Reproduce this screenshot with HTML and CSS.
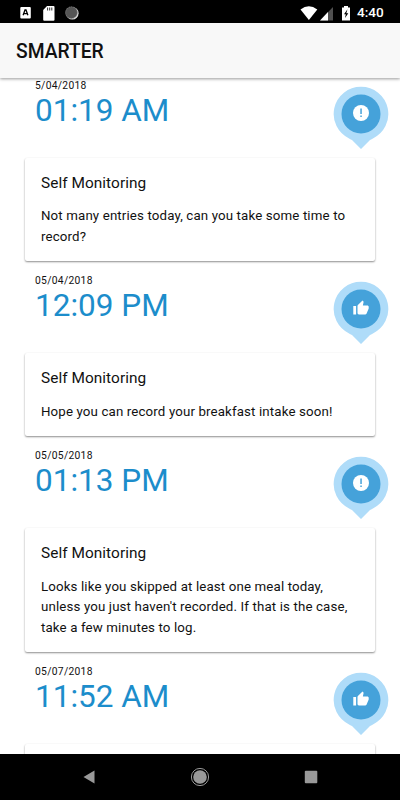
FILE: index.html
```
<!DOCTYPE html>
<html lang="en">
<head>
    <meta charset="UTF-8">
    <meta name="viewport" content="width=device-width, initial-scale=1.0">
    <title>SMARTER</title>
    <link rel="stylesheet" href="styles.css">
</head>
<body>
    <!-- shared icons -->
    <svg class="defs" width="0" height="0">
        <symbol id="pin" viewBox="0 0 56 64">
            <path d="M28 .8a27.2 27.2 0 0 1 11.5 51.9Q38 53.300 37 54.100L28 63l-9-8.900Q18 53.300 16.500 52.700A27.200 27.200 0 0 1 28 .8z" fill="#afdcf9"/>
            <circle cx="28" cy="28" r="19.500" fill="#45a2da"/>
        </symbol>
        <symbol id="alert" viewBox="0 0 56 64">
            <use href="#pin"/>
            <circle cx="28" cy="27" r="8" fill="#fff"/>
            <path d="M27.300 22.500h1.500v5.500h-1.500zM27.300 29.500h1.500v1.500h-1.500z" fill="#45a2da"/>
        </symbol>
        <symbol id="like" viewBox="0 0 56 64">
            <use href="#pin"/>
            <path transform="translate(19.600 18.800) scale(.7)" d="M1 21h4V9H1v12zm22-11c0-1.100-.9-2-2-2h-6.310l.95-4.570.03-.32c0-.41-.17-.79-.44-1.060L14.170 1 7.590 7.590C7.220 7.950 7 8.450 7 9v10c0 1.100.9 2 2 2h9c.83 0 1.540-.5 1.840-1.220l3.020-7.050c.09-.23.14-.47.14-.73v-2z" fill="#fff"/>
        </symbol>
    </svg>

    <div class="status-bar">
        <svg class="status-left" width="62" height="18" viewBox="0 0 62 18">
            <rect x=".3" y="3" width="10.500" height="11.500" rx="1" fill="#fff"/>
            <path d="M3.100 11.300L5 6h1L7.900 11.300M3.800 9.600h3.400" fill="none" stroke="#000" stroke-width="1.300"/>
            <path d="M27 2h6.500q1 0 1 1v12.700q0 1-1 1H24.200q-1 0-1-1V6z" fill="#fff"/>
            <path d="M27.600 3.500v3M29.700 3.500v3M31.800 3.500v3" stroke="#333" stroke-width="1"/>
            <circle cx="52.300" cy="9.200" r="6.300" fill="#ddd"/>
            <circle cx="51.300" cy="8.500" r="6" fill="#555"/>
            <circle cx="51.500" cy="8.700" r="5.800" fill="none" stroke="#777" stroke-dasharray="1 1"/>
        </svg>
        <svg class="status-right" width="52" height="18" viewBox="0 0 52 18">
            <path d="M.5 5.500Q8.800-1 17.300 5.500L8.900 16z" fill="#fff"/>
            <path d="M33 3v13.500H20z" fill="#505050"/>
            <path d="M28 8v8.500h-8z" fill="#fff"/>
            <path d="M44 2h4v1.500h2V16.500h-8V3.500h2z" fill="#fff"/>
            <path d="M47.500 5.200L44 10.200h1.800L45 14l3.300-4.800h-2z" fill="#000"/>
        </svg>
        <span class="clock">4:40</span>
    </div>

    <header class="toolbar">
        <h1>SMARTER</h1>
    </header>

    <main class="feed">
        <section class="entry">
            <div class="entry-head">
                <div>
                    <p class="date">5/04/2018</p>
                    <p class="time">01:19 AM</p>
                </div>
                <svg class="marker"><use href="#alert"/></svg>
            </div>
            <div class="card">
                <h2>Self Monitoring</h2>
                <p>Not many entries today, can you take some time to<br>record?</p>
            </div>
        </section>

        <section class="entry">
            <div class="entry-head">
                <div>
                    <p class="date">05/04/2018</p>
                    <p class="time">12:09 PM</p>
                </div>
                <svg class="marker"><use href="#like"/></svg>
            </div>
            <div class="card">
                <h2>Self Monitoring</h2>
                <p>Hope you can record your breakfast intake soon!</p>
            </div>
        </section>

        <section class="entry">
            <div class="entry-head">
                <div>
                    <p class="date">05/05/2018</p>
                    <p class="time">01:13 PM</p>
                </div>
                <svg class="marker"><use href="#alert"/></svg>
            </div>
            <div class="card">
                <h2>Self Monitoring</h2>
                <p>Looks like you skipped at least one meal today,<br>unless you just haven't recorded. If that is the case,<br>take a few minutes to log.</p>
            </div>
        </section>

        <section class="entry">
            <div class="entry-head">
                <div>
                    <p class="date">05/07/2018</p>
                    <p class="time">11:52 AM</p>
                </div>
                <svg class="marker"><use href="#like"/></svg>
            </div>
            <div class="card"></div>
        </section>
    </main>

    <nav class="nav-bar">
        <svg width="20" height="20" viewBox="0 0 20 20"><path d="M14.500 3.500v13L3.500 10z" fill="#999"/></svg>
        <svg width="20" height="20" viewBox="0 0 20 20">
            <circle cx="10" cy="10" r="8.600" fill="none" stroke="#999" stroke-width="1"/>
            <circle cx="10" cy="10" r="6.800" fill="#999"/>
        </svg>
        <svg width="20" height="20" viewBox="0 0 20 20"><rect x="3.800" y="3.800" width="12.500" height="12.500" rx="1" fill="#999"/></svg>
    </nav>
</body>
</html>
```
FILE: styles.css
```
* {
    box-sizing: border-box;
    margin: 0;
    padding: 0;
}
body {
    display: flex;
    flex-direction: column;
    height: 800px;
    overflow: hidden;
    background: #fff;
    color: #111;
    font-family: Roboto, sans-serif;
}
.defs {
    position: absolute;
}
.status-bar {
    display: flex;
    flex: none;
    align-items: center;
    height: 23px;
    padding: 2px 16px 0 20px;
    background: #000;
    color: #fff;
}
.status-right {
    margin-left: auto;
}
.clock {
    width: 27px;
    margin-left: 5px;
    font-size: 13.6px;
    font-weight: 500;
    line-height: 17px;
    white-space: nowrap;
    padding-bottom: 1px;
}
.toolbar {
    z-index: 1;
    display: flex;
    flex: none;
    align-items: center;
    height: 55px;
    padding: 1px 0 0 16px;
    background: #f8f8f8;
    box-shadow: 0 1px 3px rgba(0, 0, 0, 0.4);
}
.toolbar h1 {
    font-size: 19.3px;
    font-weight: 500;
}
.feed {
    flex: 1;
    min-height: 0;
    overflow: hidden;
    padding: 0 25px;
}
.entry:first-child {
    margin-top: -12px;
}
.entry-head {
    display: flex;
    justify-content: space-between;
    height: 91.7px;
    padding: 13px 0 0 10px;
}
.date {
    font-size: 10.3px;
    line-height: 13px;
    letter-spacing: 0.3px;
}
.time {
    font-size: 31.5px;
    font-weight: 400;
    line-height: 37px;
    color: #1c8dcb;
}
.marker {
    width: 56px;
    height: 64px;
    margin: 7px -13.7px 0 0;
}
.card {
    min-height: 62.3px;
    padding: 16px 16px 14px;
    border-radius: 2px;
    background: #fff;
    box-shadow: 0 1px 2px rgba(0, 0, 0, 0.45);
}
.card h2 {
    margin-bottom: 13.7px;
    font-size: 15.4px;
    font-weight: 400;
    line-height: 19px;
    letter-spacing: 0.05px;
}
.card p {
    font-size: 13.3px;
    line-height: 20.5px;
    letter-spacing: 0.13px;
    white-space: nowrap;
}
.nav-bar {
    z-index: 1;
    display: flex;
    flex: none;
    align-items: center;
    justify-content: center;
    gap: 90.5px;
    height: 46.5px;
    background: #000;
}
```
